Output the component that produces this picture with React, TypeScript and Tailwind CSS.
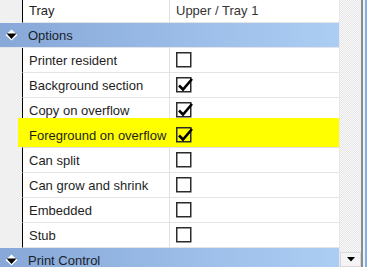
import React from 'react'

type Row =
  | { kind: 'cat'; name: string }
  | { kind: 'text'; name: string; value: string }
  | { kind: 'bool'; name: string; checked: boolean; marked?: boolean }

const rows: Row[] = [
  { kind: 'text', name: 'Tray', value: 'Upper / Tray 1' },
  { kind: 'cat', name: 'Options' },
  { kind: 'bool', name: 'Printer resident', checked: false },
  { kind: 'bool', name: 'Background section', checked: true },
  { kind: 'bool', name: 'Copy on overflow', checked: true },
  { kind: 'bool', name: 'Foreground on overflow', checked: true, marked: true },
  { kind: 'bool', name: 'Can split', checked: false },
  { kind: 'bool', name: 'Can grow and shrink', checked: false },
  { kind: 'bool', name: 'Embedded', checked: false },
  { kind: 'bool', name: 'Stub', checked: false },
  { kind: 'cat', name: 'Print Control' },
]

function CollapseGlyph() {
  return (
    <svg width="13" height="12" viewBox="0 0 13 12" className="shrink-0">
      <path d="M6.5 0.5 L12.5 6 L6.5 11.5 L0.5 6 Z" fill="#ffffff" />
      <path d="M1.5 4.5 L11.5 4.5 L6.5 10 Z" fill="#000000" />
    </svg>
  )
}

function CheckBox({ checked }: { checked: boolean }) {
  return (
    <svg width="16" height="16" viewBox="0 0 16 16" className="relative overflow-visible">
      <rect x="0.75" y="0.75" width="14" height="14" fill="none" stroke="#2b2b2b" strokeWidth="1.5" />
      {checked && (
        <path d="M3 8.5 L7 12.5 L16 2" fill="none" stroke="#000000" strokeWidth="2.6" strokeLinejoin="miter" />
      )}
    </svg>
  )
}

function PropertyRow({ row }: { row: Row }) {
  if (row.kind === 'cat') {
    return (
      <div className="flex h-[25px] items-center border-b border-[#e2e6ec] bg-linear-to-r from-[#87a8d8] to-[#acceF4]">
        <div className="flex w-[28px] pl-[5px]">
          <CollapseGlyph />
        </div>
        <span className="text-[#1b1f2a]">{row.name}</span>
      </div>
    )
  }

  return (
    <div className="relative flex h-[25px]">
      {row.kind === 'bool' && row.marked && (
        <div className="absolute left-[18px] right-0 top-[-5px] bottom-[1px] bg-[#ffff00]" />
      )}
      <div className="w-[22px] shrink-0 bg-[#f0f0f0]" />
      <div className="flex flex-1 border-l border-b border-l-black border-b-[#e4e4e4]">
        <div className="flex w-[147px] items-center border-r border-[#e0e0e0] pl-[6px]">
          <span className="relative text-[#1e1e1e]">{row.name}</span>
        </div>
        <div className="flex flex-1 items-center pl-[6px]">
          {row.kind === 'text' ? (
            <span className="relative text-[#353535]">{row.value}</span>
          ) : (
            <CheckBox checked={row.checked} />
          )}
        </div>
      </div>
    </div>
  )
}

export default function App() {
  return (
    <div
      className="flex h-[267px] w-[367px] overflow-hidden bg-white text-[13px] leading-none"
      style={{ fontFamily: '"Liberation Sans", Arial, sans-serif' }}
    >
      {/* grid area */}
      <div className="w-[339px] shrink-0 overflow-hidden">
        <div className="-mt-[2px]">
          {rows.map((row) => (
            <PropertyRow key={row.name} row={row} />
          ))}
        </div>
      </div>

      {/* vertical scrollbar */}
      <div className="flex w-[22px] shrink-0 flex-col border-l border-[#e8e8e8]">
        <div className="flex-1 bg-[#f0f0f0] bg-[image:repeating-conic-gradient(#e6e6e6_0%_25%,#fafafa_0%_50%)] bg-[length:2px_2px]" />
        <div className="flex h-[15px] items-center justify-center border border-[#d8d8d8] bg-[#f4f4f4]">
          <svg width="8" height="5" viewBox="0 0 8 5">
            <path d="M0 0 L8 0 L4 4.5 Z" fill="#000000" />
          </svg>
        </div>
      </div>

      {/* window edge */}
      <div className="w-[2px] shrink-0 bg-[#8c8c8c]" />
      <div className="w-[2px] shrink-0 bg-[#eef2f6]" />
      <div className="w-[2px] shrink-0 bg-[#7fb0e6]" />
    </div>
  )
}
